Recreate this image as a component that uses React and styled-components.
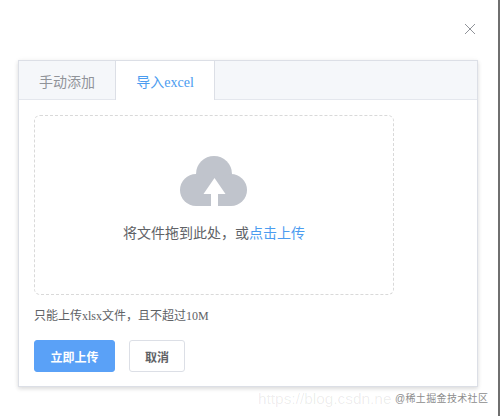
import React from "react";
import styled, { createGlobalStyle } from "styled-components";

const Global = createGlobalStyle`
  html, body { margin: 0; padding: 0; background: #fff; }
  body { font-family: "Liberation Serif", "Noto Sans CJK SC", serif; }
`;

const Page = styled.div`
  position: relative;
  box-sizing: border-box;
  width: 500px;
  height: 416px;
  overflow: hidden;
  background: #fff;
  border-right: 2px solid #6f6f6f;
  padding: 60px 20px 0 18px;
`;

const Close = styled.button`
  position: absolute;
  top: 23px;
  left: 464px;
  width: 12px;
  height: 12px;
  padding: 0;
  border: 0;
  background: none;
  color: #909399;
  display: block;
  svg { display: block; }
`;

const Card = styled.section`
  box-sizing: border-box;
  width: 460px;
  height: 327px;
  background: #fff;
  border: 1px solid #dcdfe6;
  box-shadow: 0 2px 4px 0 rgba(0, 0, 0, 0.12), 0 0 6px 0 rgba(0, 0, 0, 0.04);
`;

const TabBar = styled.div`
  box-sizing: border-box;
  display: flex;
  height: 39px;
  background: #f5f7fa;
  border-bottom: 1px solid #e4e7ed;
`;

const Tab = styled.div`
  box-sizing: border-box;
  width: ${(p) => (p.$active ? "100px" : "96px")};
  height: 39px;
  display: flex;
  align-items: center;
  justify-content: center;
  font-size: 14px;
  color: ${(p) => (p.$active ? "#4b9cf0" : "#909399")};
  background: ${(p) => (p.$active ? "#fff" : "transparent")};
  border-left: ${(p) => (p.$active ? "1px solid #dcdfe6" : "0")};
  border-right: ${(p) => (p.$active ? "1px solid #dcdfe6" : "0")};
`;

const Body = styled.div`
  padding: 15px 15px 0;
`;

const Drop = styled.div`
  box-sizing: border-box;
  width: 360px;
  height: 180px;
  border: 1px dashed #d9d9d9;
  border-radius: 6px;
  display: flex;
  flex-direction: column;
  align-items: center;
  padding-top: 40px;
`;

const CloudIcon = styled.svg`
  display: block;
  width: 68px;
  height: 50px;
`;

const DropText = styled.div`
  margin-top: 18px;
  font-size: 14px;
  line-height: 20px;
  color: #606266;
`;

const Link = styled.em`
  font-style: normal;
  color: #4b9cf0;
`;

const Tip = styled.div`
  margin-top: 12px;
  font-size: 12px;
  line-height: 18px;
  color: #606266;
`;

const Actions = styled.div`
  display: flex;
  gap: 14px;
  margin-top: 15px;
`;

const Button = styled.button`
  box-sizing: border-box;
  height: 32px;
  padding: 0;
  width: ${(p) => (p.$primary ? "81px" : "56px")};
  font-family: "Liberation Sans", "Noto Sans CJK SC", sans-serif;
  font-size: 12px;
  font-weight: 700;
  border-radius: 3px;
  border: 1px solid ${(p) => (p.$primary ? "#5aa1f7" : "#dcdfe6")};
  background: ${(p) => (p.$primary ? "#5aa1f7" : "#fff")};
  color: ${(p) => (p.$primary ? "#fff" : "#606266")};
`;

const Watermark = styled.div`
  position: absolute;
  left: 258px;
  top: 389px;
  font-family: "Liberation Sans", sans-serif;
  font-size: 15.4px;
  line-height: 20px;
  color: rgba(0, 0, 0, 0.08);
  white-space: nowrap;
`;

const Stamp = styled.div`
  position: absolute;
  left: 395px;
  top: 391px;
  font-family: "Liberation Sans", "Noto Sans CJK SC", sans-serif;
  font-size: 10px;
  letter-spacing: 0.35px;
  line-height: 16px;
  color: #8d8d8d;
  white-space: nowrap;
`;

export default function App() {
  return (
    <>
      <Global />
      <Page>
        <Close aria-label="关闭">
          <svg width="12" height="12" viewBox="0 0 12 12" fill="none" stroke="currentColor" strokeWidth="1">
            <path d="M1 1 L11 11 M11 1 L1 11" />
          </svg>
        </Close>
        <Card>
          <TabBar>
            <Tab>手动添加</Tab>
            <Tab $active>导入excel</Tab>
          </TabBar>
          <Body>
            <Drop>
              <CloudIcon viewBox="0 0 68 50">
                <g fill="#c0c4cc">
                  <circle cx="34" cy="18" r="18" />
                  <circle cx="16" cy="34" r="16" />
                  <circle cx="51" cy="34" r="16" />
                  <rect x="16" y="20" width="35" height="30" />
                </g>
                <path fill="#fff" d="M34.5 22 L45.5 38 L38 38 L38 50 L31 50 L31 38 L23.5 38 Z" />
              </CloudIcon>
              <DropText>
                将文件拖到此处，或<Link>点击上传</Link>
              </DropText>
            </Drop>
            <Tip>只能上传xlsx文件，且不超过10M</Tip>
            <Actions>
              <Button $primary>立即上传</Button>
              <Button>取消</Button>
            </Actions>
          </Body>
        </Card>
        <Watermark>https://blog.csdn.ne</Watermark>
        <Stamp>@稀土掘金技术社区</Stamp>
      </Page>
    </>
  );
}
